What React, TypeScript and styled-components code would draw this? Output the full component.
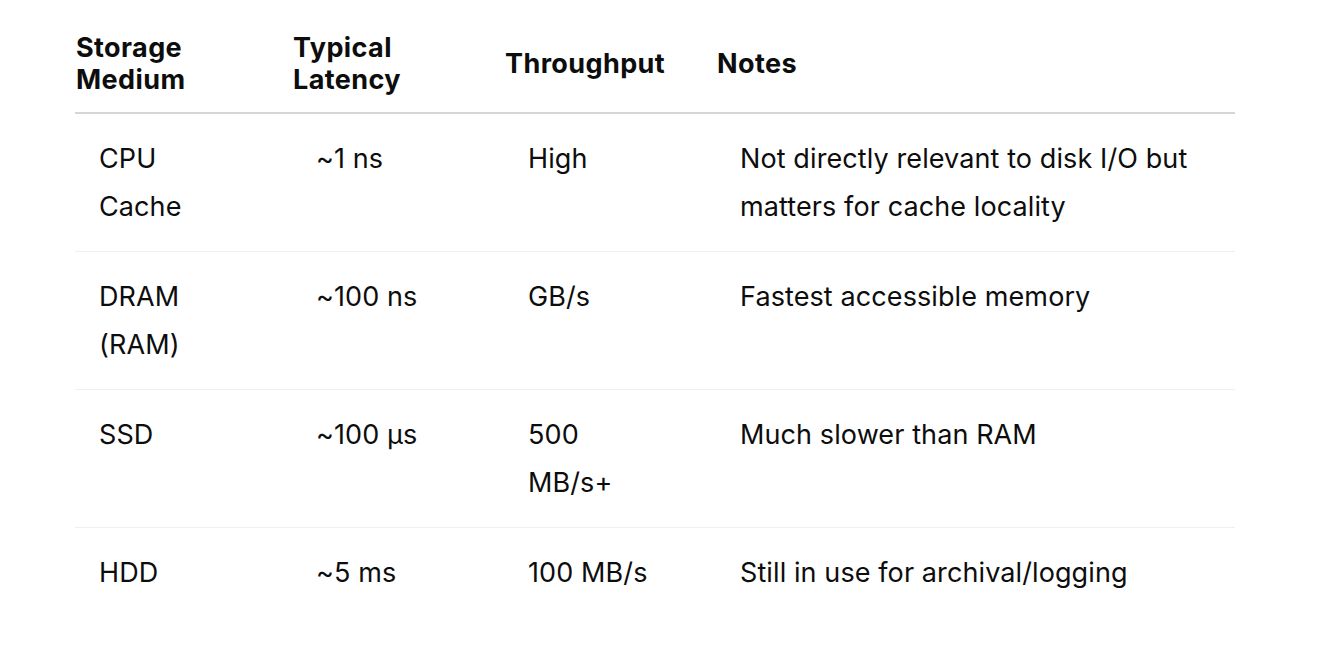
import React from 'react';
import styled, { createGlobalStyle } from 'styled-components';

type Row = {
  medium: string;
  latency: string;
  throughput: string;
  notes: string;
};

const rows: Row[] = [
  {
    medium: 'CPU Cache',
    latency: '~1 ns',
    throughput: 'High',
    notes: 'Not directly relevant to disk I/O but matters for cache locality',
  },
  { medium: 'DRAM (RAM)', latency: '~100 ns', throughput: 'GB/s', notes: 'Fastest accessible memory' },
  { medium: 'SSD', latency: '~100 µs', throughput: '500 MB/s+', notes: 'Much slower than RAM' },
  { medium: 'HDD', latency: '~5 ms', throughput: '100 MB/s', notes: 'Still in use for archival/logging' },
];

// column width and the room its body text gets before wrapping
const columns = [
  { width: 217, content: 110 },
  { width: 212, content: 150 },
  { width: 212, content: 128 },
  { width: 519, content: 470 },
];

const GlobalStyle = createGlobalStyle`
  body {
    margin: 0;
    background: #ffffff;
    font-family: Inter, "Liberation Sans", sans-serif;
    color: #0d0d0d;
  }
`;

const Page = styled.div`
  padding: 32px 0 0 75px;
`;

const Table = styled.table`
  width: 1160px;
  table-layout: fixed;
  border-collapse: collapse;
  border-spacing: 0;
`;

const HeadRow = styled.tr`
  border-bottom: 2px solid #d6d6d6;
`;

const HeadCell = styled.th`
  padding: 0 0 16px 1px;
  text-align: left;
  vertical-align: middle;
  font-size: 27px;
  line-height: 32px;
  font-weight: 700;
  letter-spacing: 0.4px;
`;

const BodyRow = styled.tr<{ $last?: boolean }>`
  border-bottom: ${({ $last }) => ($last ? 'none' : '1px solid #efefef')};
`;

const BodyCell = styled.td`
  padding: 21px 0 20px 24px;
  vertical-align: top;
  font-size: 27px;
  line-height: 48px;
  font-weight: 400;
  letter-spacing: 0.1px;
`;

const CellText = styled.div<{ $max: number }>`
  max-width: ${({ $max }) => $max}px;
`;

export default function App() {
  return (
    <Page>
      <GlobalStyle />
      <Table>
        <colgroup>
          {columns.map((c, i) => (
            <col key={i} style={{ width: c.width }} />
          ))}
        </colgroup>
        <thead>
          <HeadRow>
            <HeadCell>
              Storage
              <br />
              Medium
            </HeadCell>
            <HeadCell>
              Typical
              <br />
              Latency
            </HeadCell>
            <HeadCell>Throughput</HeadCell>
            <HeadCell>Notes</HeadCell>
          </HeadRow>
        </thead>
        <tbody>
          {rows.map((r, i) => {
            const cells = [r.medium, r.latency, r.throughput, r.notes];
            return (
              <BodyRow key={r.medium} $last={i === rows.length - 1}>
                {cells.map((text, j) => (
                  <BodyCell key={j}>
                    <CellText $max={columns[j].content}>{text}</CellText>
                  </BodyCell>
                ))}
              </BodyRow>
            );
          })}
        </tbody>
      </Table>
    </Page>
  );
}
